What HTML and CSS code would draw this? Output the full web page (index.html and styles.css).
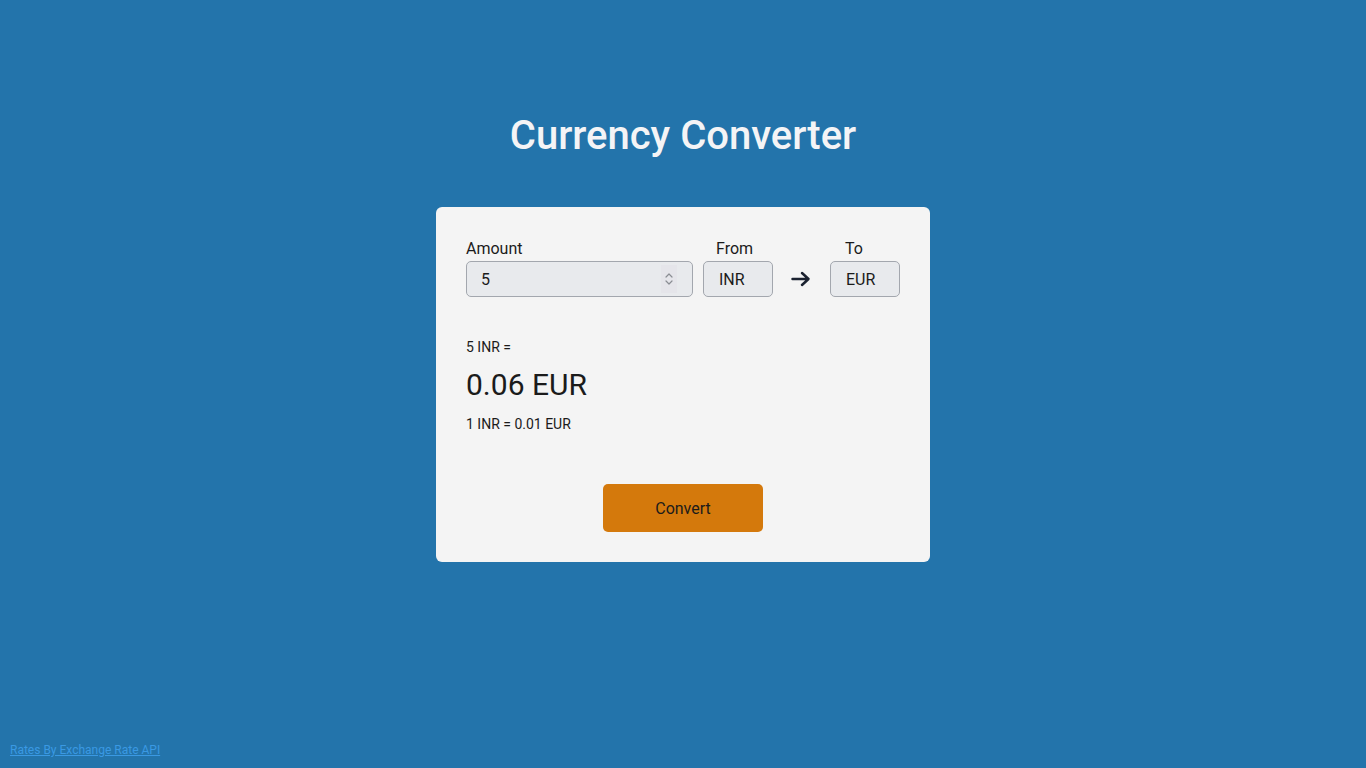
FILE: index.html
```html
<!DOCTYPE html>
<html lang="en">
<head>
<meta charset="utf-8">
<title>Currency Converter</title>
<link rel="stylesheet" href="styles.css">
</head>
<body>
<main class="page">
  <h1 class="title">Currency Converter</h1>
  <section class="card">
    <div class="row">
      <div class="field amount-field">
        <label class="label">Amount</label>
        <div class="amount-wrap">
          <input class="input amount" type="number" value="5">
          <span class="spin">
            <svg width="10" height="16" viewBox="0 0 10 16"><path d="M2 6l3-3 3 3M2 10l3 3 3-3" fill="none" stroke="#8a8d93" stroke-width="1.2" stroke-linecap="round" stroke-linejoin="round"/></svg>
          </span>
        </div>
      </div>
      <div class="field cur-field">
        <label class="label label-from">From</label>
        <input class="input cur" type="text" value="INR">
      </div>
      <div class="arrow">
        <svg width="20" height="16" viewBox="0 0 20 16"><path d="M1.5 8H17M11 2l6.5 6-6.5 6" fill="none" stroke="#1b2230" stroke-width="2.5" stroke-linecap="round" stroke-linejoin="round"/></svg>
      </div>
      <div class="field cur-field">
        <label class="label label-to">To</label>
        <input class="input cur" type="text" value="EUR">
      </div>
    </div>
    <div class="result">
      <p class="small">5 INR =</p>
      <p class="big">0.06 EUR</p>
      <p class="small">1 INR = 0.01 EUR</p>
    </div>
    <div class="actions">
      <button class="btn">Convert</button>
    </div>
  </section>
</main>
<footer class="footer">
  <a class="credit" href="#">Rates By Exchange Rate API</a>
</footer>
</body>
</html>
```
FILE: styles.css
```css
* { box-sizing: border-box; }
html, body { height: 100%; }
body {
  margin: 0;
  background: #2374ab;
  font-family: Roboto, "Liberation Sans", sans-serif;
  color: #1b1b1b;
  position: relative;
}
.page {
  display: flex;
  flex-direction: column;
  align-items: center;
  padding-top: 112px;
}
.title {
  margin: 0;
  font-size: 40px;
  font-weight: 500;
  color: #f4f4f6;
  line-height: 48px;
}
.card {
  margin-top: 47px;
  width: 494px;
  height: 355px;
  background: #f4f4f4;
  border-radius: 6px;
  padding: 33px 30px 30px;
}
.row {
  display: flex;
  align-items: flex-end;
}
.field { display: flex; flex-direction: column; }
.label {
  font-size: 16px;
  line-height: 18px;
  margin-bottom: 3px;
  color: #1b1b1b;
}
.label-from { padding-left: 13px; }
.label-to { padding-left: 15px; }
.input {
  height: 36px;
  border: 1px solid #a3a7ae;
  border-radius: 5px;
  background: #e8eaed;
  font-family: Roboto, "Liberation Sans", sans-serif;
  font-size: 16px;
  color: #1b1b1b;
  padding: 0 12px 0 15px;
  outline: none;
  display: block;
}
.amount-wrap { position: relative; }
.amount {
  width: 227px;
  padding-left: 14px;
  -moz-appearance: textfield;
}
.amount::-webkit-inner-spin-button,
.amount::-webkit-outer-spin-button {
  -webkit-appearance: none;
  margin: 0;
}
.spin {
  position: absolute;
  right: 16px;
  top: 4px;
  width: 16px;
  height: 28px;
  background: #e5e5ea;
  display: flex;
  align-items: center;
  justify-content: center;
  pointer-events: none;
}
.amount-field { margin-right: 10px; }
.cur { width: 70px; }
.arrow {
  width: 57px;
  height: 36px;
  display: flex;
  align-items: center;
  justify-content: center;
  padding-right: 2px;
}
.result { margin-top: 40px; }
.small {
  margin: 0;
  font-size: 14px;
  line-height: 20px;
}
.big {
  margin: 10px 0 11px;
  font-size: 30px;
  line-height: 36px;
}
.actions {
  display: flex;
  justify-content: center;
  margin-top: 50px;
}
.btn {
  width: 160px;
  height: 48px;
  border: none;
  border-radius: 5px;
  background: #d4790c;
  font-family: Roboto, "Liberation Sans", sans-serif;
  font-size: 16px;
  color: #1b1b1b;
  cursor: pointer;
}
.footer {
  position: absolute;
  left: 10px;
  bottom: 10px;
}
.credit {
  font-size: 12px;
  color: #3a99e3;
}
```
